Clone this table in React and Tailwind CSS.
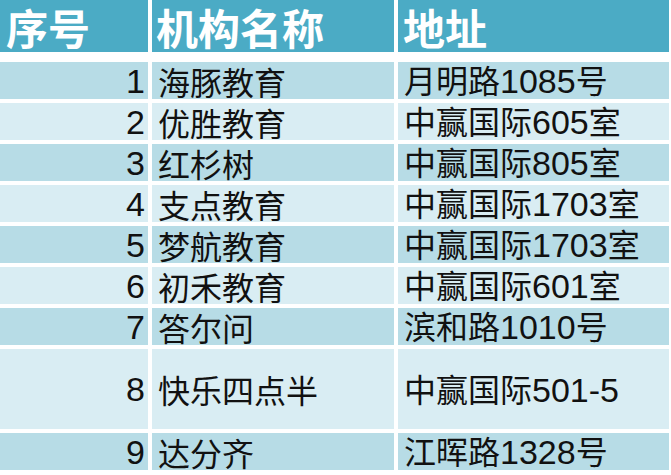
import React from 'react'

const rows = [
    { no: 1, name: '海豚教育', addr: '月明路1085号' },
    { no: 2, name: '优胜教育', addr: '中赢国际605室' },
    { no: 3, name: '红杉树', addr: '中赢国际805室' },
    { no: 4, name: '支点教育', addr: '中赢国际1703室' },
    { no: 5, name: '梦航教育', addr: '中赢国际1703室' },
    { no: 6, name: '初禾教育', addr: '中赢国际601室' },
    { no: 7, name: '答尔问', addr: '滨和路1010号' },
    { no: 8, name: '快乐四点半', addr: '中赢国际501-5', tall: true },
    { no: 9, name: '达分齐', addr: '江晖路1328号' },
]

// the sheet's digits are tall and narrow, next to wide hanzi
function Txt({ text }) {
    const parts = String(text).split(/([\d-]+)/).filter(Boolean)
    return (
        <span className="whitespace-nowrap leading-none">
            {parts.map((p, i) =>
                /^[\d-]+$/.test(p)
                    ? <span key={i} className="font-['Liberation_Sans_Narrow','Liberation_Sans',sans-serif] text-[34px]">{p}</span>
                    : <span key={i} className="font-['Noto_Sans_CJK_SC',sans-serif] text-[32px]">{p}</span>
            )}
        </span>
    )
}

function App() {
    return (
        <div className="w-[671px] h-[475px] bg-white overflow-hidden text-[#111]">
            <div className="grid grid-cols-[148px_242px_271px] gap-x-[4px] h-[52px] font-['Noto_Sans_CJK_SC',sans-serif] font-bold text-white text-[42px] leading-none">
                <div className="bg-[#4babc5] pl-[6px] pt-[6px]">序号</div>
                <div className="bg-[#4babc5] pl-[4px] pt-[6px]">机构名称</div>
                <div className="bg-[#4babc5] pl-[5px] pt-[6px]">地址</div>
            </div>

            <div className="flex flex-col gap-[4px] mt-[10px]">
                {rows.map((r, i) => {
                    const bg = i % 2 === 0 ? 'bg-[#b7dce6]' : 'bg-[#d9edf3]'
                    const h = r.tall ? 'h-[80px]' : 'h-[37px]'
                    return (
                        <div key={r.no} className={`grid grid-cols-[148px_242px_271px] gap-x-[4px] ${h}`}>
                            <div className={`${bg} flex items-center justify-end pr-[3px]`}><Txt text={r.no} /></div>
                            <div className={`${bg} flex items-center pl-[6px]`}><Txt text={r.name} /></div>
                            <div className={`${bg} flex items-center pl-[6px]`}><Txt text={r.addr} /></div>
                        </div>
                    )
                })}
            </div>
        </div>
    )
}

export default App
